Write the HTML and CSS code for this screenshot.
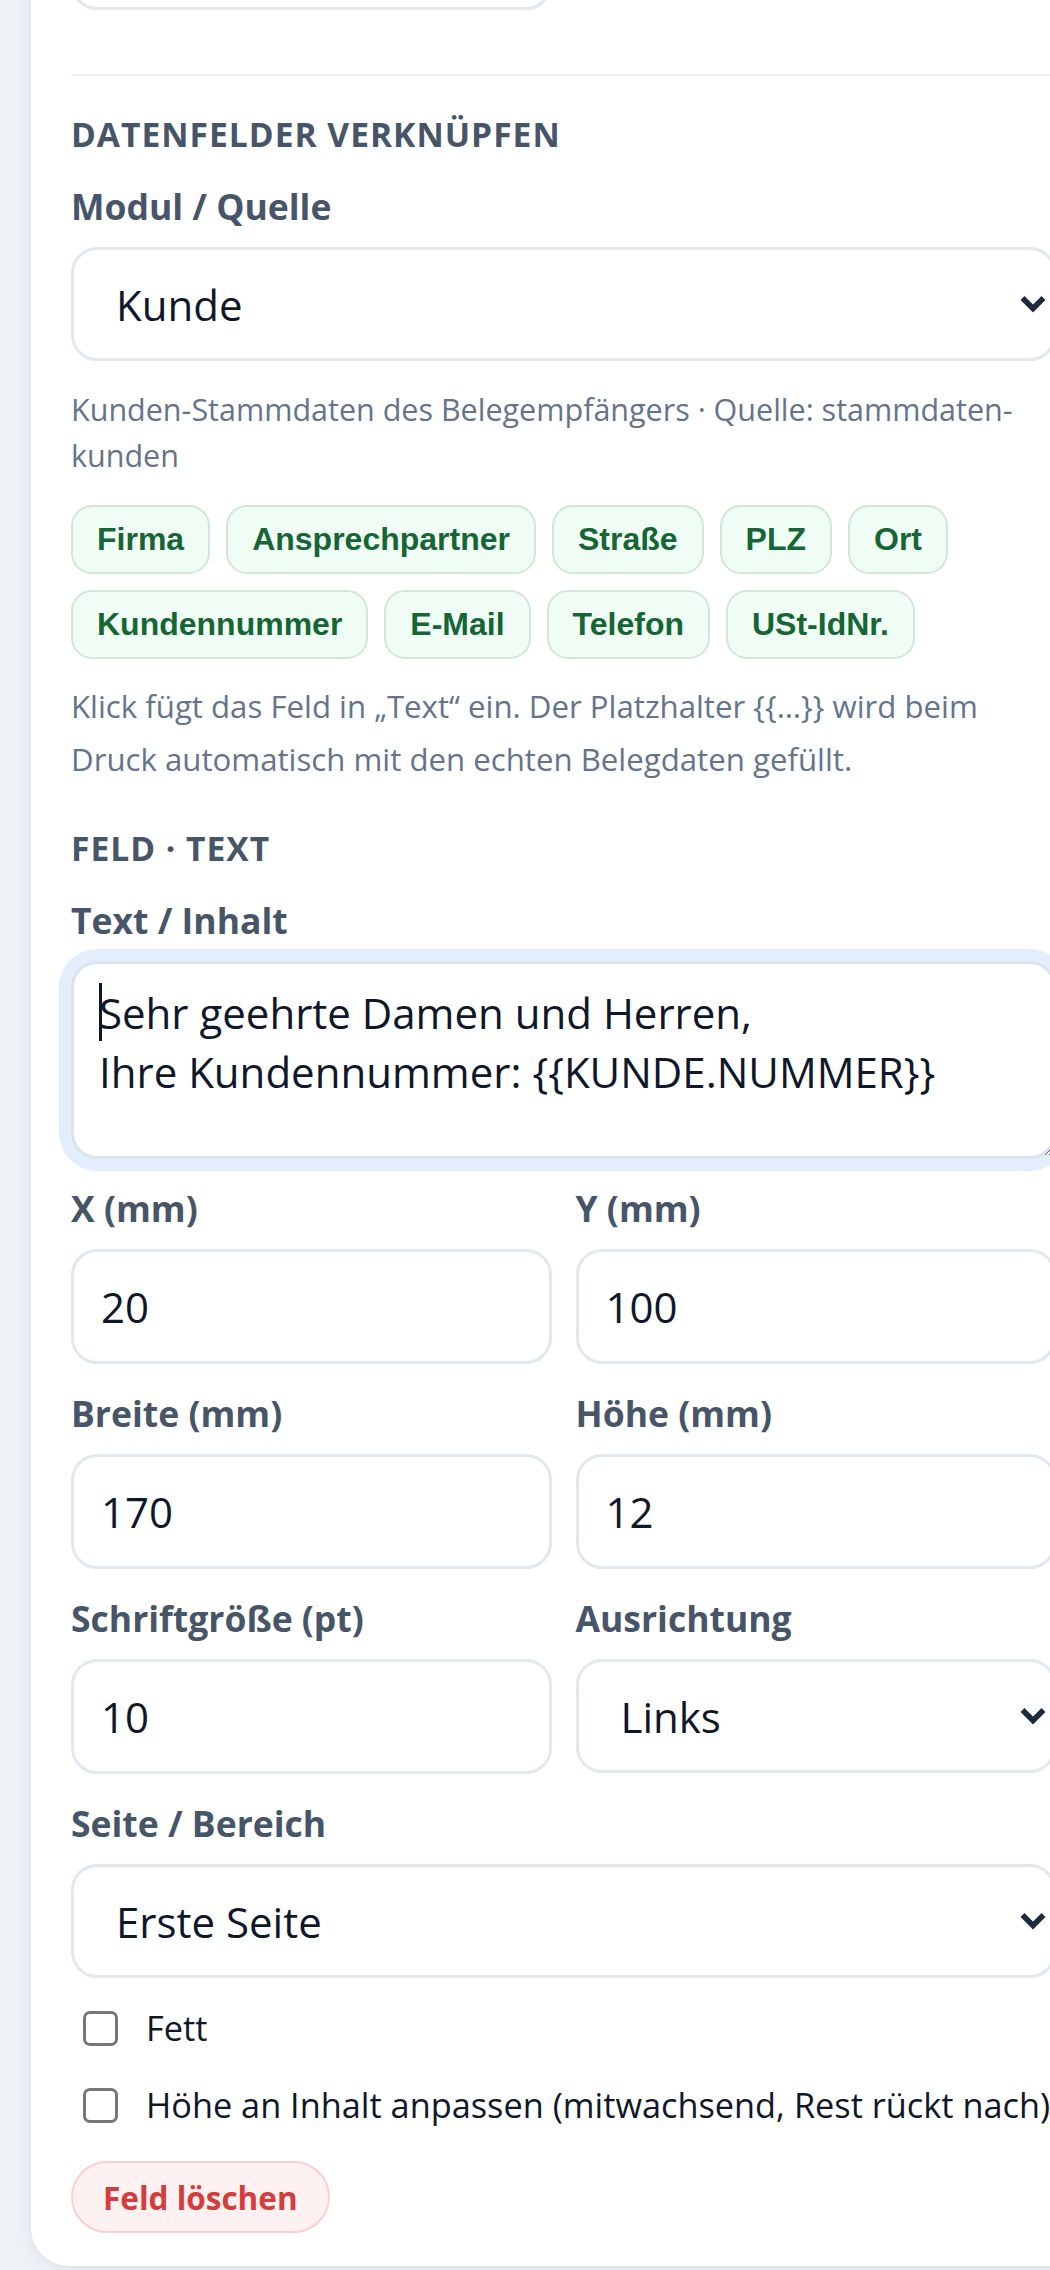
FILE: index.html
```html
<!DOCTYPE html>
<html lang="de">
<head>
<meta charset="utf-8">
<title>Feld bearbeiten</title>
<link rel="stylesheet" href="styles.css">
</head>
<body>
<div class="card">
  <div class="grid2">
    <input class="input" type="text" value="">
  </div>

  <div class="sep"></div>

  <h3 class="sec-title first">Datenfelder verknüpfen</h3>
  <div class="field">
    <label class="label">Modul / Quelle</label>
    <div class="select-wrap">
      <select class="select"><option>Kunde</option></select>
      <svg class="chev" width="26" height="18" viewBox="0 0 26 18"><path d="M2.5 3 L13 13.5 L23.5 3" fill="none" stroke="#1e293b" stroke-width="5.5"/></svg>
    </div>
  </div>
  <p class="hint hint1">Kunden-Stammdaten des Belegempfängers · Quelle: stammdaten-kunden</p>
  <div class="chips">
    <button class="chip">Firma</button>
    <button class="chip">Ansprechpartner</button>
    <button class="chip">Straße</button>
    <button class="chip">PLZ</button>
    <button class="chip">Ort</button>
    <button class="chip">Kundennummer</button>
    <button class="chip">E-Mail</button>
    <button class="chip">Telefon</button>
    <button class="chip">USt-IdNr.</button>
  </div>
  <p class="hint hint2">Klick fügt das Feld in „Text“ ein. Der Platzhalter {{…}} wird beim Druck automatisch mit den echten Belegdaten gefüllt.</p>

  <h3 class="sec-title second">Feld · Text</h3>
  <div class="field">
    <label class="label">Text / Inhalt</label>
    <div class="ta-wrap">
      <textarea class="textarea">Sehr geehrte Damen und Herren,
Ihre Kundennummer: {{KUNDE.NUMMER}}</textarea>
      <span class="caret"></span>
    </div>
  </div>

  <div class="grid2">
    <div class="field">
      <label class="label">X (mm)</label>
      <input class="input" type="text" value="20">
    </div>
    <div class="field">
      <label class="label">Y (mm)</label>
      <input class="input" type="text" value="100">
    </div>
    <div class="field">
      <label class="label">Breite (mm)</label>
      <input class="input" type="text" value="170">
    </div>
    <div class="field">
      <label class="label">Höhe (mm)</label>
      <input class="input" type="text" value="12">
    </div>
    <div class="field">
      <label class="label">Schriftgröße (pt)</label>
      <input class="input" type="text" value="10">
    </div>
    <div class="field">
      <label class="label">Ausrichtung</label>
      <div class="select-wrap">
        <select class="select"><option>Links</option></select>
        <svg class="chev" width="26" height="18" viewBox="0 0 26 18"><path d="M2.5 3 L13 13.5 L23.5 3" fill="none" stroke="#1e293b" stroke-width="5.5"/></svg>
      </div>
    </div>
  </div>

  <div class="field">
    <label class="label">Seite / Bereich</label>
    <div class="select-wrap">
      <select class="select"><option>Erste Seite</option></select>
      <svg class="chev" width="26" height="18" viewBox="0 0 26 18"><path d="M2.5 3 L13 13.5 L23.5 3" fill="none" stroke="#1e293b" stroke-width="5.5"/></svg>
    </div>
  </div>

  <label class="check first-check"><input type="checkbox" class="cb"><span>Fett</span></label>
  <label class="check"><input type="checkbox" class="cb"><span>Höhe an Inhalt anpassen (mitwachsend, Rest rückt nach)</span></label>

  <button class="danger">Feld löschen</button>
</div>
</body>
</html>
```

FILE: styles.css
```css
html, body {
  margin: 0;
  padding: 0;
  overflow: hidden;
}
body {
  width: 1050px;
  height: 2270px;
  background: #eef2f7;
  font-family: "Open Sans", "Noto Sans", sans-serif;
  color: #0f172a;
}
.card {
  box-sizing: border-box;
  width: 1071px;
  margin: -140px 0 0 29px;
  padding: 33px 42px 33px 40px;
  background: #ffffff;
  border: 2px solid #e2e8f0;
  border-radius: 40px;
  box-shadow: 0 2px 14px rgba(15, 23, 42, 0.05);
}
.grid2 {
  display: grid;
  grid-template-columns: 1fr 1fr;
  column-gap: 24px;
}
.grid2 > .input {
  margin: 0;
}
.input,
.select,
.textarea {
  box-sizing: border-box;
  width: 100%;
  display: block;
  margin: 0;
  background: #ffffff;
  border: 3px solid #e2e8f0;
  border-radius: 26px;
  font-family: "Open Sans", "Noto Sans", sans-serif;
  font-size: 42px;
  color: #0f172a;
  outline: none;
}
.input {
  height: 115px;
  padding: 0 27px;
}
.select {
  height: 114px;
  padding: 0 60px 0 42px;
  -webkit-appearance: none;
  appearance: none;
}
.select-wrap {
  position: relative;
}
.chev {
  position: absolute;
  right: 10px;
  top: 50%;
  margin-top: -9px;
  pointer-events: none;
}
.sep {
  margin-top: 64px;
  height: 2px;
  background: #edf1f5;
}
.sec-title {
  margin: 0;
  font-size: 33.6px;
  font-weight: 700;
  letter-spacing: 1px;
  line-height: 46px;
  color: #475569;
  text-transform: uppercase;
}
.sec-title.first {
  margin-top: 35px;
}
.sec-title.second {
  margin-top: 39px;
}
.field {
  margin-top: 24px;
}
.label {
  display: block;
  margin-bottom: 16px;
  font-size: 35.5px;
  font-weight: 700;
  line-height: 50px;
  color: #475569;
}
.hint {
  margin: 0;
  font-size: 30.5px;
  color: #64748b;
}
.hint1 {
  margin-top: 25px;
  line-height: 46px;
}
.hint2 {
  margin-top: 21px;
  font-size: 31.2px;
  line-height: 53px;
}
.chips {
  margin-top: 27px;
  display: flex;
  flex-wrap: wrap;
  gap: 16px;
}
.chip {
  box-sizing: border-box;
  height: 69px;
  margin: 0;
  padding: 0 24px;
  background: #f0fdf4;
  border: 2px solid #d3e7d8;
  border-radius: 21px;
  font-family: "Liberation Sans", Arial, sans-serif;
  font-size: 32px;
  font-weight: 700;
  color: #166534;
}
.ta-wrap {
  position: relative;
}
.textarea {
  height: 198px;
  padding: 20px 25px;
  line-height: 58.8px;
  resize: vertical;
  border-color: #dbe3ee;
  box-shadow: 0 0 0 12px #e4edfc;
  overflow: hidden;
}
.caret {
  position: absolute;
  left: 28px;
  top: 22px;
  width: 3px;
  height: 58px;
  background: #0f172a;
}
.check {
  display: flex;
  align-items: center;
  height: 52px;
  margin-top: 25px;
  font-size: 34.3px;
  line-height: 52px;
  color: #0f172a;
  white-space: nowrap;
}
.check.first-check {
  margin-top: 24px;
}
.cb {
  -webkit-appearance: none;
  appearance: none;
  box-sizing: border-box;
  width: 35px;
  height: 35px;
  margin: 0 28px 0 12px;
  flex: none;
  border: 3px solid #767676;
  border-radius: 7px;
  background: #ffffff;
}
.danger {
  display: block;
  box-sizing: border-box;
  height: 72px;
  margin: 30px 0 0;
  padding: 0 30px;
  background: #fef1f1;
  border: 2px solid #fccfcf;
  border-radius: 999px;
  font-family: "Open Sans", "Noto Sans", sans-serif;
  font-size: 31.5px;
  font-weight: 700;
  color: #d63c3c;
}
```
